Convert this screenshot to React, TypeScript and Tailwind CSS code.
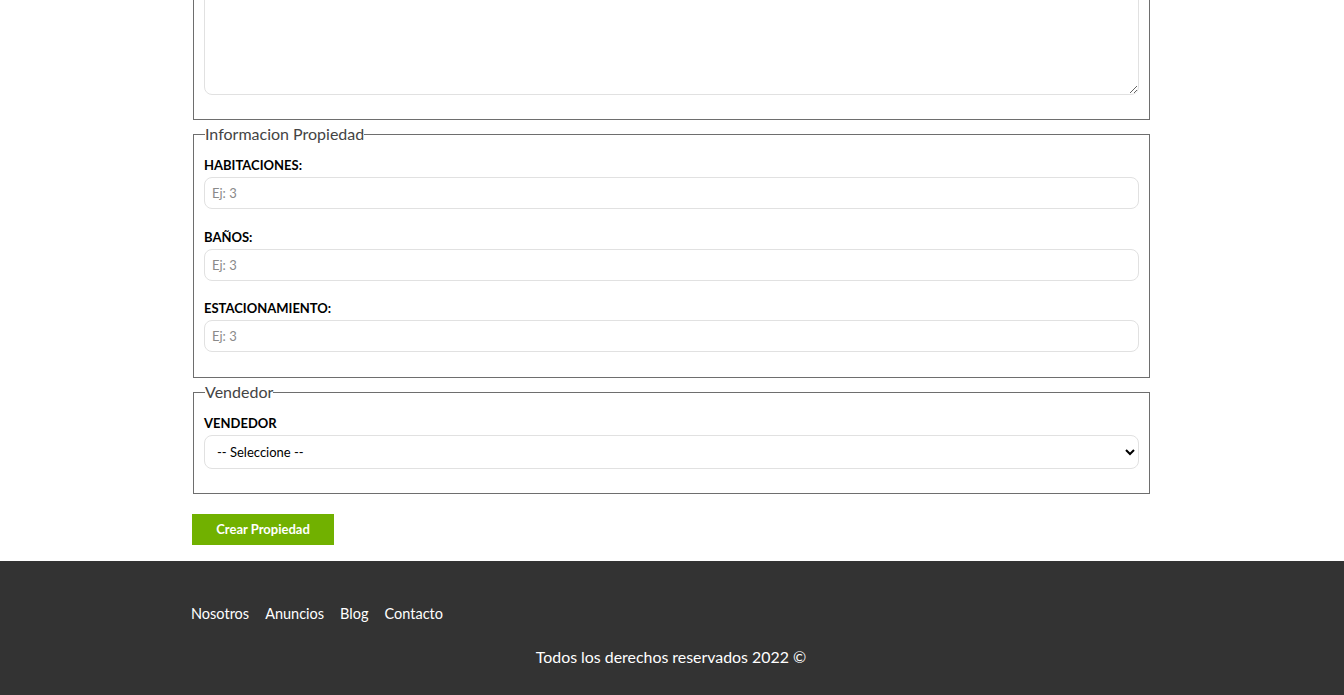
import React from "react";

const inputCls =
  "mt-[4px] block w-full h-[32px] rounded-[8px] border border-[#e1e1e1] bg-white px-[7px] text-[13px] text-black placeholder:text-[#8a8a8a] outline-none";

function Field({ label }: { label: string }) {
  return (
    <div className="flex flex-col">
      <label className="block text-[13px] leading-[16px] font-bold text-black">{label}</label>
      <input type="number" placeholder="Ej: 3" className={inputCls} />
    </div>
  );
}

export default function App() {
  return (
    <div className="min-h-screen bg-white overflow-hidden" style={{ fontFamily: "Lato, 'Open Sans', sans-serif" }}>
      <main className="ml-[192px] w-[958px] flex flex-col">
        <fieldset className="-mt-[60px] ml-[1px] border border-[#6e6e6e] px-[10px] pb-[24px]">
          <textarea className="block w-full h-[154px] rounded-[8px] border border-[#e1e1e1] bg-white px-[7px] py-[6px] text-[13px] outline-none" />
        </fieldset>

        <fieldset className="mt-[4px] ml-[1px] border border-[#6e6e6e] px-[10px] pb-[25px]">
          <legend className="ml-[1px] text-[16px] leading-[20px] text-[#444]">Informacion Propiedad</legend>
          <div className="mt-[13px] flex flex-col gap-[19.5px]">
            <Field label="HABITACIONES:" />
            <Field label="BAÑOS:" />
            <Field label="ESTACIONAMIENTO:" />
          </div>
        </fieldset>

        <fieldset className="mt-[4px] ml-[1px] border border-[#6e6e6e] px-[10px] pb-[24px]">
          <legend className="ml-[1px] text-[16px] leading-[20px] text-[#444]">Vendedor</legend>
          <div className="mt-[13px] flex flex-col">
            <label className="block text-[13px] leading-[16px] font-bold text-black">VENDEDOR</label>
            <select className="mt-[4px] block w-full h-[34px] rounded-[8px] border border-[#e1e1e1] bg-white px-[8px] text-[13px] text-black outline-none">
              <option>-- Seleccione --</option>
            </select>
          </div>
        </fieldset>

        <div className="mt-[20px] mb-[16px]">
          <button className="w-[142px] h-[31px] bg-[#71b100] text-white text-[13px] font-bold">Crear Propiedad</button>
        </div>
      </main>

      <footer className="bg-[#333333] pt-[43px] pb-[40px]">
        <div className="ml-[192px] w-[958px]">
          <nav className="flex gap-[16px] text-[14.5px] leading-[19px] text-white -ml-[1px]">
            <a href="#">Nosotros</a>
            <a href="#">Anuncios</a>
            <a href="#">Blog</a>
            <a href="#">Contacto</a>
          </nav>
          <p className="mt-[24px] text-center text-[15.9px] leading-[19px] text-white">Todos los derechos reservados 2022 ©</p>
        </div>
      </footer>
    </div>
  );
}
